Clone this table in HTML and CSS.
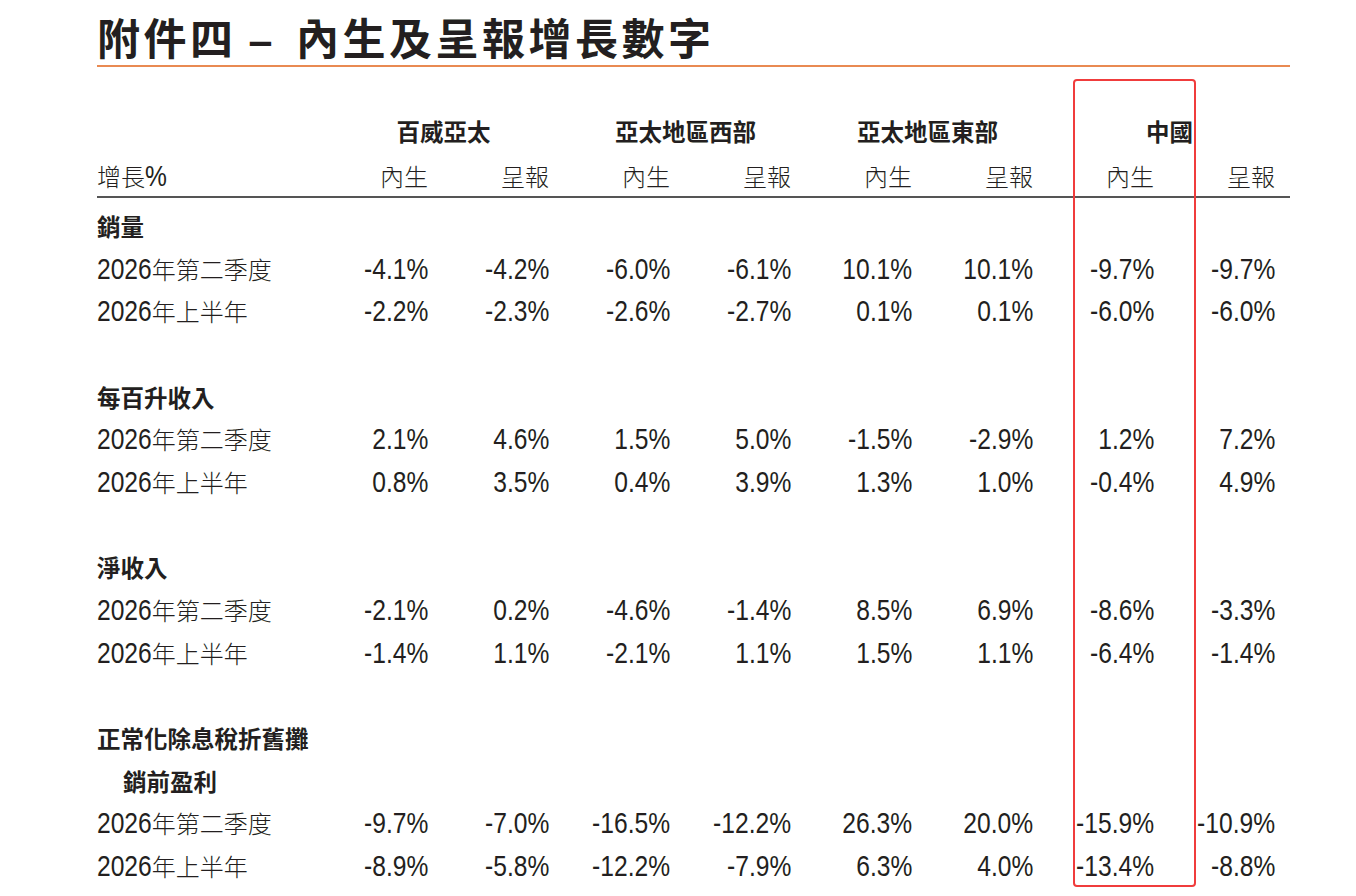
FILE: index.html
```html
<!DOCTYPE html>
<html lang="zh-Hant">
<head>
<meta charset="utf-8">
<title>附件四 – 內生及呈報增長數字</title>
<link rel="stylesheet" href="styles.css">
</head>
<body>
<div class="page">
  <h1 class="title"><span>附件四</span><span class="dash">–</span><span>內生及呈報增長數字</span></h1>

  <div class="head">
    <div class="row groups">
      <div class="lbl"></div>
      <div class="grp">百威亞太</div>
      <div class="grp">亞太地區西部</div>
      <div class="grp">亞太地區東部</div>
      <div class="grp">中國</div>
    </div>
    <div class="row subs">
      <div class="lbl">增長<span class="d pct">%</span></div>
      <div class="sub">內生</div><div class="sub">呈報</div>
      <div class="sub">內生</div><div class="sub">呈報</div>
      <div class="sub">內生</div><div class="sub">呈報</div>
      <div class="sub">內生</div><div class="sub">呈報</div>
    </div>
  </div>

  <div class="body">
    <div class="row"><div class="sec">銷量</div></div>
    <div class="row">
      <div class="lbl"><span class="d">2026</span>年第二季度</div>
      <div class="n"><span>-4.1%</span></div><div class="n"><span>-4.2%</span></div><div class="n"><span>-6.0%</span></div><div class="n"><span>-6.1%</span></div>
      <div class="n"><span>10.1%</span></div><div class="n"><span>10.1%</span></div><div class="n"><span>-9.7%</span></div><div class="n"><span>-9.7%</span></div>
    </div>
    <div class="row">
      <div class="lbl"><span class="d">2026</span>年上半年</div>
      <div class="n"><span>-2.2%</span></div><div class="n"><span>-2.3%</span></div><div class="n"><span>-2.6%</span></div><div class="n"><span>-2.7%</span></div>
      <div class="n"><span>0.1%</span></div><div class="n"><span>0.1%</span></div><div class="n"><span>-6.0%</span></div><div class="n"><span>-6.0%</span></div>
    </div>
    <div class="row"></div>

    <div class="row"><div class="sec">每百升收入</div></div>
    <div class="row">
      <div class="lbl"><span class="d">2026</span>年第二季度</div>
      <div class="n"><span>2.1%</span></div><div class="n"><span>4.6%</span></div><div class="n"><span>1.5%</span></div><div class="n"><span>5.0%</span></div>
      <div class="n"><span>-1.5%</span></div><div class="n"><span>-2.9%</span></div><div class="n"><span>1.2%</span></div><div class="n"><span>7.2%</span></div>
    </div>
    <div class="row">
      <div class="lbl"><span class="d">2026</span>年上半年</div>
      <div class="n"><span>0.8%</span></div><div class="n"><span>3.5%</span></div><div class="n"><span>0.4%</span></div><div class="n"><span>3.9%</span></div>
      <div class="n"><span>1.3%</span></div><div class="n"><span>1.0%</span></div><div class="n"><span>-0.4%</span></div><div class="n"><span>4.9%</span></div>
    </div>
    <div class="row"></div>

    <div class="row"><div class="sec">淨收入</div></div>
    <div class="row">
      <div class="lbl"><span class="d">2026</span>年第二季度</div>
      <div class="n"><span>-2.1%</span></div><div class="n"><span>0.2%</span></div><div class="n"><span>-4.6%</span></div><div class="n"><span>-1.4%</span></div>
      <div class="n"><span>8.5%</span></div><div class="n"><span>6.9%</span></div><div class="n"><span>-8.6%</span></div><div class="n"><span>-3.3%</span></div>
    </div>
    <div class="row">
      <div class="lbl"><span class="d">2026</span>年上半年</div>
      <div class="n"><span>-1.4%</span></div><div class="n"><span>1.1%</span></div><div class="n"><span>-2.1%</span></div><div class="n"><span>1.1%</span></div>
      <div class="n"><span>1.5%</span></div><div class="n"><span>1.1%</span></div><div class="n"><span>-6.4%</span></div><div class="n"><span>-1.4%</span></div>
    </div>
    <div class="row"></div>

    <div class="row"><div class="sec">正常化除息稅折舊攤</div></div>
    <div class="row"><div class="sec indent">銷前盈利</div></div>
    <div class="row">
      <div class="lbl"><span class="d">2026</span>年第二季度</div>
      <div class="n"><span>-9.7%</span></div><div class="n"><span>-7.0%</span></div><div class="n"><span>-16.5%</span></div><div class="n"><span>-12.2%</span></div>
      <div class="n"><span>26.3%</span></div><div class="n"><span>20.0%</span></div><div class="n"><span>-15.9%</span></div><div class="n"><span>-10.9%</span></div>
    </div>
    <div class="row">
      <div class="lbl"><span class="d">2026</span>年上半年</div>
      <div class="n"><span>-8.9%</span></div><div class="n"><span>-5.8%</span></div><div class="n"><span>-12.2%</span></div><div class="n"><span>-7.9%</span></div>
      <div class="n"><span>6.3%</span></div><div class="n"><span>4.0%</span></div><div class="n"><span>-13.4%</span></div><div class="n"><span>-8.8%</span></div>
    </div>
  </div>

  <div class="highlight"></div>
</div>
</body>
</html>
```

FILE: styles.css
```css
html, body {
  margin: 0;
  padding: 0;
  background: #ffffff;
}

body {
  color: #231f20;
  font-family: "Noto Sans CJK TC", "Noto Sans CJK SC", sans-serif;
  overflow: hidden;
}

.page {
  position: relative;
  width: 1193px;
  height: 896px;
  padding: 12px 0 0 97px;
  box-sizing: content-box;
}

.title {
  margin: 0;
  height: 48px;
  padding: 0 0 5px 0;
  border-bottom: 2px solid #e98a52;
  font-family: "Noto Sans CJK TC", "Noto Sans CJK SC", sans-serif;
  font-weight: 700;
  font-size: 43px;
  line-height: 48px;
  letter-spacing: 3.5px;
  white-space: nowrap;
  overflow: visible;
}

.title .dash {
  font-family: "Liberation Sans", sans-serif;
  font-weight: 700;
  font-size: 43px;
  line-height: 10px;
  margin: 0 20px 0 12px;
}

.head {
  margin-top: 44px;
  border-bottom: 2px solid #555555;
}

.row {
  display: grid;
  grid-template-columns: 210px repeat(8, 121px);
  height: 42.67px;
  line-height: 42.67px;
  white-space: nowrap;
}

.groups {
  height: 45px;
  line-height: 40px;
}

.subs {
  height: 40px;
  line-height: 40px;
}

.grp {
  grid-column: span 2;
  text-align: center;
  padding-left: 31px;
  font-weight: 700;
  font-size: 23.5px;
}

.sub {
  text-align: right;
  font-weight: 300;
  font-size: 24px;
}

.lbl {
  font-weight: 300;
  font-size: 24px;
}

.d {
  display: inline-block;
  font-family: "Liberation Sans", sans-serif;
  font-weight: 400;
  font-size: 30px;
  line-height: 20px;
  transform: scaleX(0.82);
  transform-origin: left center;
  margin-right: -12px;
}

.d.pct {
  margin-right: 0;
}

.body {
  padding-top: 7px;
}

.sec {
  grid-column: 1 / -1;
  font-weight: 700;
  font-size: 23.5px;
}

.sec.indent {
  padding-left: 26px;
}

.n {
  text-align: right;
  font-family: "Liberation Sans", sans-serif;
  font-size: 30px;
}

.n span {
  display: inline-block;
  transform: scaleX(0.82);
  transform-origin: right center;
}

.highlight {
  position: absolute;
  left: 1073px;
  top: 79px;
  width: 119px;
  height: 804px;
  border: 2px solid #f03c3c;
  border-radius: 4px;
}
```
